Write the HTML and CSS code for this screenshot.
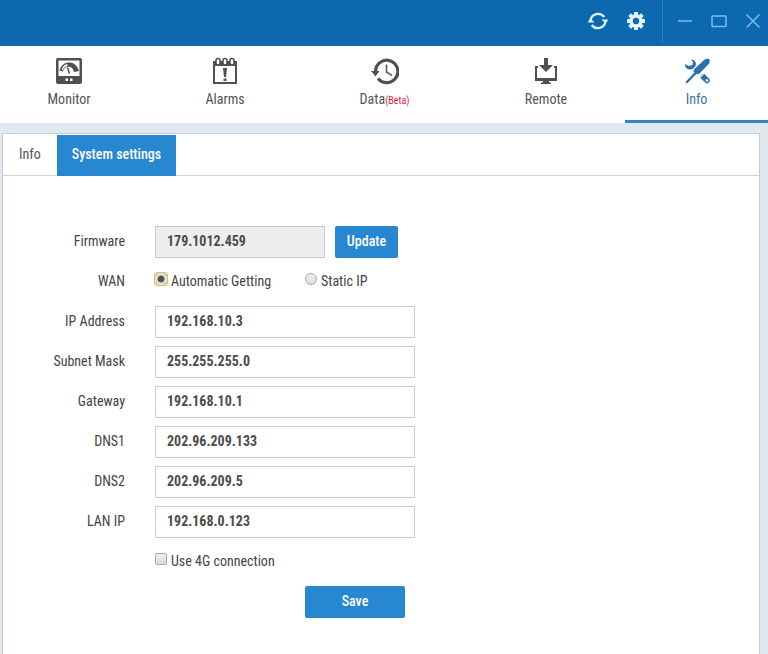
FILE: index.html
```html
<!DOCTYPE html>
<html lang="en">
<head>
<meta charset="utf-8">
<title>System settings</title>
<link rel="stylesheet" href="styles.css">
</head>
<body>
<header class="titlebar">
  <div class="tools">
    <button type="button" aria-label="Refresh"><svg width="22" height="20" viewBox="0 0 22 20"><g fill="none" stroke="#dff1fc" stroke-width="2.200"><path d="M3.500 9.500A7.700 7.700 0 0 1 17.300 6M18.500 10.500A7.700 7.700 0 0 1 4.700 14"/></g><path fill="#dff1fc" d="M.5 11.500 3.500 7.500l4 4zM14.500 8.500h7L18.500 12.500z"/></svg></button>
    <button type="button" aria-label="Settings"><svg width="20" height="20" viewBox="0 0 20 20"><g fill="#e6f5fd"><circle cx="10" cy="10" r="6.700"/><g id="teeth"><rect x="8" y="1" width="4" height="18" rx=".5"/><rect x="1" y="8" width="18" height="4" rx=".5"/></g><use href="#teeth" transform="rotate(45 10 10)"/></g><circle cx="10" cy="10" r="3.200" fill="#0d69af"/></svg></button>
  </div>
  <div class="window">
    <button type="button" aria-label="Minimize"><svg width="16" height="16" viewBox="0 0 16 16"><path d="M1 8h14"/></svg></button>
    <button type="button" aria-label="Maximize"><svg width="16" height="16" viewBox="0 0 16 16"><rect x="1" y="3" width="14" height="10.500" rx=".5"/></svg></button>
    <button type="button" aria-label="Close"><svg width="16" height="16" viewBox="0 0 16 16"><path d="M1.500 1.500l13 13M14.500 1.500l-13 13"/></svg></button>
  </div>
</header>
<nav class="nav">
  <a href="#"><svg width="28" height="28" viewBox="0 0 28 28"><rect x="1" y="1" width="26" height="26" rx="2" fill="#505050"/><path fill="#fff" d="M3.500 3.500h21v15.500h-21z"/><path fill="#505050" d="M4.500 13.500C6 8 10 5.500 14 5.500s8.500 2.500 10 8.500l-5 1C18 11 16 9.700 13 9.700c-3 0-4.500 2.300-5 4.800z"/><path fill="#fff" d="M6.700 12.500C8 9 10 7.400 12.300 7.300l.5 1.600c-2.500.2-4.300 1.800-5 4.300z"/><path fill="none" stroke="#505050" stroke-width="1.500" d="M12.500 10.500 14.500 16.500"/><path fill="#fff" d="M10.500 21.500h2.500v2.500h-2.500zM15 21.500h2.500v2.500H15z"/></svg><span>Monitor</span></a>
  <a href="#"><svg width="28" height="28" viewBox="0 0 28 28"><path fill="#505050" d="M2 4h24v23H2z"/><path fill="#fff" d="M4 9h20v16H4z"/><g fill="#fff" stroke="#505050" stroke-width="1.500"><rect x="5" y="1.500" width="4" height="6.500" rx="2"/><rect x="12" y="1.500" width="4" height="6.500" rx="2"/><rect x="19" y="1.500" width="4" height="6.500" rx="2"/></g><path fill="#505050" d="M12 11h4l-1 9h-2zM12.500 21.500h3V24h-3z"/></svg><span>Alarms</span></a>
  <a href="#"><svg width="28" height="28" viewBox="0 0 28 28"><path fill="none" stroke="#505050" stroke-width="3.200" d="M4.500 14.500A11.200 11.200 0 1 1 7 21.500"/><path fill="#505050" d="M0 14h8.500L4.500 19.500z"/><path fill="none" stroke="#606060" stroke-width="1.700" d="M15.500 7.500V15l5.500 3.500"/></svg><span>Data<small>(Beta)</small></span></a>
  <a href="#"><svg width="28" height="28" viewBox="0 0 28 28"><path fill="#505050" d="M12 1h4v7h5l-7 7-7-7h5z"/><path fill="#505050" d="M3 9h3v2H5v10h18V11h-1V9h3v15h-8v1.500h2V27H9v-1.500h2V24H3z"/></svg><span>Remote</span></a>
  <a href="#" class="active" aria-current="page"><svg width="28" height="28" viewBox="0 0 28 28"><path fill="#2c70b2" d="M8 2.500C12 2.500 14 6 12.500 9L10 12C6 13.500 1.500 11.500 2 7l3.500 2L9.500 8 10 5z"/><path fill="none" stroke="#2c70b2" stroke-width="5.500" stroke-linecap="round" d="M20 19.500 24 23.500"/><path stroke="#fff" stroke-width="1.500" d="M16 21 21 16"/><path fill="none" stroke="#2c70b2" stroke-width="2.500" stroke-linecap="round" d="M4 25 14 14.500"/><path fill="#2c70b2" d="M11.500 12l9-8.500c2-2 5-2 6-1 .8 1.500 0 3.500-1 4.700L17 16c-1.500 1.800-3.500 1.500-5 .3s-2-3-.5-4.300z"/><circle cx="24" cy="23.500" r="1.300" fill="#fff"/></svg><span>Info</span></a>
</nav>
<main class="panel">
  <div class="tabs">
    <button type="button" class="tab">Info</button>
    <button type="button" class="tab selected">System settings</button>
  </div>
  <form class="form">
    <label class="name" for="firmware">Firmware</label>
    <div class="field"><input class="text short" id="firmware" value="179.1012.459" readonly><button type="button" class="btn">Update</button></div>
    <span class="name" id="wan">WAN</span>
    <div class="field options" role="radiogroup" aria-labelledby="wan">
      <label class="choice"><input type="radio" name="wan" checked>Automatic Getting</label>
      <label class="choice"><input type="radio" name="wan">Static IP</label>
    </div>
    <label class="name" for="ip">IP Address</label>
    <div class="field"><input class="text" id="ip" value="192.168.10.3"></div>
    <label class="name" for="mask">Subnet Mask</label>
    <div class="field"><input class="text" id="mask" value="255.255.255.0"></div>
    <label class="name" for="gateway">Gateway</label>
    <div class="field"><input class="text" id="gateway" value="192.168.10.1"></div>
    <label class="name" for="dns1">DNS1</label>
    <div class="field"><input class="text" id="dns1" value="202.96.209.133"></div>
    <label class="name" for="dns2">DNS2</label>
    <div class="field"><input class="text" id="dns2" value="202.96.209.5"></div>
    <label class="name" for="lan">LAN IP</label>
    <div class="field"><input class="text" id="lan" value="192.168.0.123"></div>
    <div class="field wide"><label class="choice"><input type="checkbox">Use 4G connection</label></div>
    <div class="field wide actions"><button type="button" class="btn save">Save</button></div>
  </form>
</main>
</body>
</html>
```
FILE: styles.css
```css
* { box-sizing: border-box; }
html { height: 100%; }
body {
  margin: 0;
  min-height: 100%;
  display: flex;
  flex-direction: column;
  background: #e1e8ef;
  color: #444;
  font: 14px/20px "Roboto Condensed", "Liberation Sans Narrow", Roboto, sans-serif;
}
button, input { font: inherit; margin: 0; }
button { border: 0; padding: 0; background: none; cursor: pointer; }
svg { display: block; }

.titlebar {
  height: 46px;
  flex: none;
  display: flex;
  justify-content: flex-end;
  background: #0d69af;
}
.tools, .window { display: flex; align-items: center; height: 42px; }
.tools { gap: 17px; padding-right: 16px; }
.window { gap: 18px; padding: 0 7px 0 14px; border-left: 1px solid #2f80be; }
.window svg { fill: none; stroke: #77bdf0; stroke-width: 1.5; }

.nav {
  flex: none;
  display: grid;
  grid-template-columns: 138fr 174fr 145fr 10fr 158fr 143fr;
  height: 77px;
  background: #fff;
}
.nav a {
  display: flex;
  flex-direction: column;
  align-items: center;
  gap: 4px;
  padding-top: 11px;
  color: #555;
  text-decoration: none;
  border-bottom: 3px solid transparent;
}
.nav a:nth-child(4) { grid-column: 5; }
.nav a.active { color: #3f71ab; border-color: #2f86c1; }
.nav small { font-size: 10px; color: #d8232e; }

.panel {
  flex: 1;
  margin: 10px 8px 0 2px;
  background: #fff;
  border: 1px solid #c3ced8;
  border-bottom: 0;
}
.tabs { display: flex; padding-top: 1px; border-bottom: 1px solid #ccd5dc; }
.tab { height: 40px; padding: 0 16px 2px; color: #555; }
.tab.selected {
  margin-bottom: -1px;
  height: 41px;
  padding: 0 15px 3px;
  background: #2787d0;
  color: #fff;
  font-weight: 500;
}

.form {
  display: grid;
  grid-template-columns: 122px 1fr;
  column-gap: 30px;
  row-gap: 8px;
  padding: 50px 0 32px;
}
.name { text-align: right; line-height: 30px; }
.field { display: flex; align-items: center; gap: 10px; height: 32px; }
.wide { grid-column: 2; }
.text {
  width: 260px;
  height: 32px;
  padding: 0 11px 2px;
  border: 1px solid #c3cdd6;
  background: #fff;
  color: #4c4c4c;
  font-weight: 700;
  outline: 0;
}
.short { width: 170px; background: #eee; }
.btn {
  width: 63px;
  height: 32px;
  padding-bottom: 2px;
  border-radius: 2px;
  background: #2787d0;
  color: #fff;
  font-weight: 500;
}
.choice { display: flex; gap: 4px; min-width: 140px; padding-bottom: 2px; line-height: 20px; }
.choice input {
  appearance: none;
  width: 12px;
  height: 12px;
  margin-top: 2px;
  border: 1px solid #aaa;
  border-radius: 2px;
  background: linear-gradient(#eee, #ddd);
}
.choice input[type="radio"] { border-radius: 50%; }
.choice input[type="radio"]:checked {
  border-radius: 2px;
  border-color: #ddd;
  background: radial-gradient(circle, #555 0 3px, #e8e8e8 4px, #e8e8e8 5px, #aaa 6px);
  outline: 1px solid #e5bf4e;
}
.actions { padding-left: 150px; }
.save { width: 100px; }
```
